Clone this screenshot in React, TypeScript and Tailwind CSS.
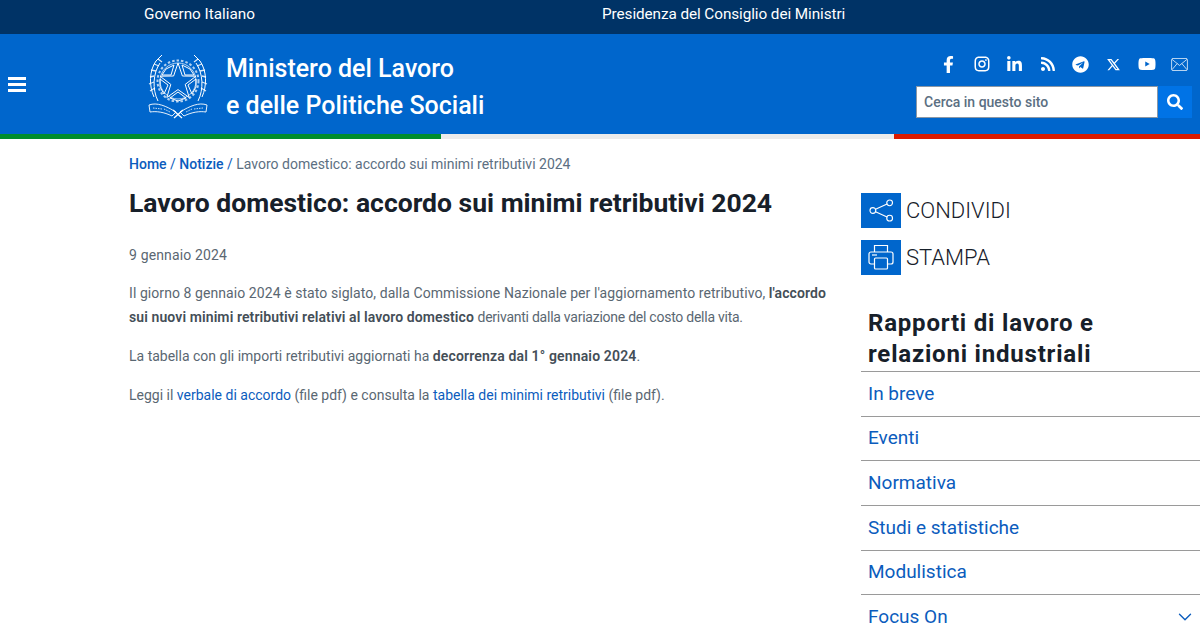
import { ChevronDown } from "lucide-react";
import { FaFacebookF, FaLinkedinIn, FaRss, FaTelegram, FaYoutube, FaSearch } from "react-icons/fa";
import { RiInstagramLine, RiTwitterXLine } from "react-icons/ri";

const navItems = ["In breve", "Eventi", "Normativa", "Studi e statistiche", "Modulistica"];

function Emblem() {
  const star = "M30 12 L34.4 25 L48 25.2 L37.2 33.4 L41.2 46.5 L30 38.6 L18.8 46.5 L22.8 33.4 L12 25.2 L25.6 25 Z";
  return (
    <svg viewBox="0 0 60 68" className="w-[60px] h-[68px]" fill="none" stroke="white">
      <circle cx="30" cy="30" r="20.5" strokeWidth="2" strokeDasharray="2.5 2" opacity="0.7" />
      <circle cx="30" cy="30" r="18" strokeWidth="0.7" />
      <path d="M26 14 L18 18 L14 24 L23 24 Z M34 14 L42 18 L46 24 L37 24 Z M12 28 L12 36 L16 43 L20 34 Z M48 28 L48 36 L44 43 L40 34 Z M22 47 L30 41 L38 47 L30 50 Z" strokeWidth="1" />
      <path d={star} fill="#0066cc" strokeWidth="1" />
      <path d="M6 46 C1 35 1 20 8 10 L14 4 M10 50 C4 38 5 22 12 12 M54 46 C59 35 59 20 52 10 L46 4 M50 50 C56 38 55 22 48 12" strokeWidth="1" />
      <path d="M2 40 L7 37 M1 33 L6 31 M2 26 L6 25 M3 19 L8 20 M6 13 L11 15 M10 8 L14 11 M58 40 L53 37 M59 33 L54 31 M58 26 L54 25 M57 19 L52 20 M54 13 L49 15 M50 8 L46 11" strokeWidth="1.3" opacity="0.85" />
      <path d="M1 54 C9 51 18 55 28 61 L24 65 C16 61 8 60 2 61 Z M59 54 C51 51 42 55 32 61 L36 65 C44 61 52 60 58 61 Z" strokeWidth="0.9" />
      <path d="M5 57 L14 58 M16 58 L22 61 M55 57 L46 58 M44 58 L38 61" strokeWidth="0.8" strokeDasharray="1.5 1" />
      <path d="M25 59 L34 67 M35 59 L26 67" strokeWidth="1.3" />
    </svg>
  );
}

function MailIcon() {
  return (
    <svg viewBox="0 0 18 14" className="w-[17px] h-[13px]" fill="none" stroke="white" strokeWidth="0.8">
      <rect x="0.5" y="0.5" width="17" height="13" rx="1.5" />
      <path d="M1 1.5 L9 8 L17 1.5 M1 12.5 L6.5 6 M17 12.5 L11.5 6" />
    </svg>
  );
}

function ShareIcon() {
  return (
    <svg viewBox="0 0 26 24" className="w-[25px] h-[23px]" fill="none" stroke="white" strokeWidth="1.2">
      <circle cx="4" cy="12" r="3" />
      <circle cx="21.5" cy="4" r="3" />
      <circle cx="21.5" cy="20" r="3" />
      <path d="M6.8 10.7 L18.8 5.3 M6.8 13.3 L18.8 18.7" />
    </svg>
  );
}

function PrintIcon() {
  return (
    <svg viewBox="0 0 26 26" className="w-[26px] h-[26px]" fill="none" stroke="white" strokeWidth="1.2">
      <path d="M6.5 8 V1.5 H19.5 V8" />
      <path d="M6.5 20 H3 C1.8 20 1 19.2 1 18 V10 C1 8.8 1.8 8 3 8 H23 C24.2 8 25 8.8 25 10 V18 C25 19.2 24.2 20 23 20 H19.5" />
      <rect x="6.5" y="14" width="13" height="11" rx="1" />
      <path d="M4 11 H9" />
    </svg>
  );
}

const socialIcons = [
  <FaFacebookF size={17} />,
  <RiInstagramLine size={18} />,
  <FaLinkedinIn size={17} />,
  <FaRss size={16} />,
  <FaTelegram size={17} />,
  <RiTwitterXLine size={15} />,
  <FaYoutube size={18} />,
  <MailIcon />,
];

export default function App() {
  return (
    <div className="h-[634px] overflow-hidden bg-white font-['Roboto',sans-serif]">
      <div className="h-[34px] bg-[#003366] text-white text-[15.3px] flex items-center pb-[6px]">
        <span className="ml-[144px] w-[458px]">Governo Italiano</span>
        <span className="tracking-[-0.08px]">Presidenza del Consiglio dei Ministri</span>
      </div>

      <header className="h-[100px] bg-[#0066cc] flex text-white">
        <div className="w-[148px] pl-[8px] flex items-center">
          <div className="flex flex-col gap-[3px] w-[18px]">
            <span className="h-[3px] bg-white" />
            <span className="h-[3px] bg-white" />
            <span className="h-[3px] bg-white" />
          </div>
        </div>
        <div className="flex items-center gap-[18px] w-[768px] pt-[1px]">
          <Emblem />
          <div className="font-medium text-[25px] leading-[37px] pt-[5px]">
            Ministero del Lavoro
            <br />
            e delle Politiche Sociali
          </div>
        </div>
        <div className="w-[284px] pt-[19px]">
          <div className="flex items-center h-[22px] pl-[16px]">
            {socialIcons.map((icon, i) => (
              <span key={i} className="w-[33px] flex justify-center">
                {icon}
              </span>
            ))}
          </div>
          <div className="flex mt-[11px] w-[276px] h-[32px]">
            <div className="w-[242px] bg-white border border-[#8a97a5] text-[#5b6f82] text-[14px] font-medium px-[7px] flex items-center">
              Cerca in questo sito
            </div>
            <div className="w-[34px] bg-[#0073e6] flex items-center justify-center">
              <FaSearch size={16} />
            </div>
          </div>
        </div>
      </header>

      <div className="flex h-[5px]">
        <div className="w-[441px] bg-[#008c2d]" />
        <div className="w-[453px] bg-[#ebebeb]" />
        <div className="flex-1 bg-[#d91a00]" />
      </div>

      <div className="flex">
        <main className="w-[861px] pl-[129px] pr-[30px]">
          <div className="pt-[15px] text-[14px] leading-[20px] text-[#5c6f82]">
            <a className="font-medium text-[#0b5cbd]">Home</a>
            <span className="text-[#0b5cbd]"> / </span>
            <a className="font-medium text-[#0b5cbd]">Notizie</a>
            <span className="text-[#0b5cbd]"> / </span>
            Lavoro domestico: accordo sui minimi retributivi 2024
          </div>
          <h1 className="mt-[11px] text-[26.5px] leading-[36px] font-bold text-[#17202a]">
            Lavoro domestico: accordo sui minimi retributivi 2024
          </h1>
          <div className="text-[14px] leading-[24px] text-[#5a6772]">
            <p className="mt-[22px] tracking-[0.15px]">9 gennaio 2024</p>
            <p className="mt-[14px]">
              <span className="tracking-[0.07px]">
                Il giorno 8 gennaio 2024 è stato siglato, dalla Commissione Nazionale per l'aggiornamento retributivo,
              </span>{" "}
              <b className="font-semibold text-[#444e57] tracking-[0.1px]">l'accordo</b>
              <br />
              <b className="font-semibold text-[#444e57] tracking-[0.1px]">
                sui nuovi minimi retributivi relativi al lavoro domestico
              </b>{" "}
              <span className="tracking-[-0.25px]">derivanti dalla variazione del costo della vita.</span>
            </p>
            <p className="mt-[15px]">
              La tabella con gli importi retributivi aggiornati ha{" "}
              <b className="font-semibold text-[#444e57] tracking-[0.15px]">decorrenza dal 1° gennaio 2024</b>.
            </p>
            <p className="mt-[15px]">
              Leggi il <a className="text-[#0b5cbd]">verbale di accordo</a> (file pdf) e consulta la{" "}
              <a className="text-[#0b5cbd]">tabella dei minimi retributivi</a> (file pdf).
            </p>
          </div>
        </main>

        <aside className="flex-1 pt-[53px]">
          <div className="flex items-center gap-[5px] h-[36px] text-[22px] font-light text-[#17202a]">
            <span className="w-[40px] h-[35px] bg-[#0066cc] flex items-center justify-center">
              <ShareIcon />
            </span>
            <span className="pt-[1px]">CONDIVIDI</span>
          </div>
          <div className="flex items-center gap-[5px] h-[36px] mt-[11px] text-[22px] font-light text-[#17202a]">
            <span className="w-[40px] h-[35px] bg-[#0066cc] flex items-center justify-center">
              <PrintIcon />
            </span>
            <span className="pt-[1px]">STAMPA</span>
          </div>
          <h2 className="mt-[33px] pl-[7px] text-[24px] leading-[31px] font-bold tracking-[0.8px] text-[#17202a]">
            Rapporti di lavoro e
            <br />
            relazioni industriali
          </h2>
          <ul className="mt-[1px] text-[19px] text-[#0b5cbd]">
            {navItems.map((item) => (
              <li key={item} className="h-[44.7px] border-t border-[#9a9a9a] pl-[7px] flex items-center">
                {item}
              </li>
            ))}
            <li className="h-[44.7px] border-t border-[#9a9a9a] pl-[7px] pr-[4px] flex items-center justify-between">
              Focus On
              <ChevronDown size={22} strokeWidth={1.5} />
            </li>
          </ul>
        </aside>
      </div>
    </div>
  );
}
